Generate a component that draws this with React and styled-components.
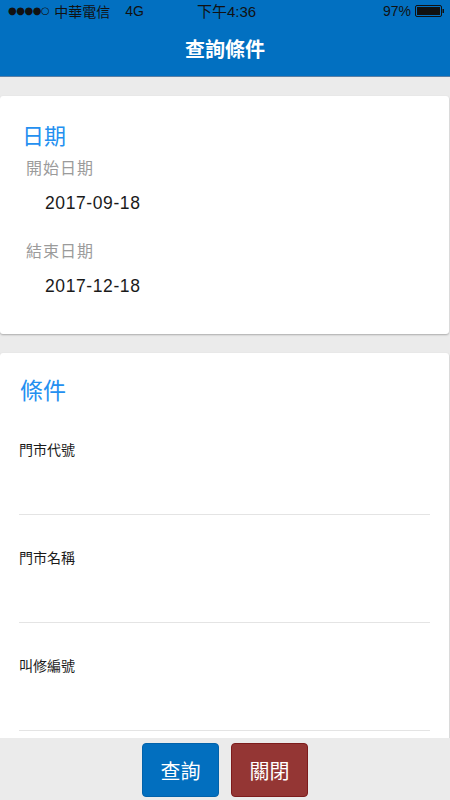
import React from "react";
import styled, { createGlobalStyle } from "styled-components";

const Global = createGlobalStyle`
  html, body { margin: 0; padding: 0; }
  body {
    background: #ebebeb;
    font-family: "Liberation Sans", "Noto Sans CJK TC", sans-serif;
    overflow: hidden;
  }
  * { box-sizing: border-box; }
`;

const Page = styled.div`
  width: 450px;
  height: 800px;
  display: flex;
  flex-direction: column;
  background: #ebebeb;
  overflow: hidden;
`;

const StatusBar = styled.div`
  height: 20px;
  background: #0270c1;
  display: grid;
  grid-template-columns: 1fr auto 1fr;
  align-items: center;
  padding: 0 5px 0 8px;
  font-size: 14px;
  color: #111;
`;

const StatusLeft = styled.div`
  display: flex;
  align-items: center;
  gap: 4px;
`;

const Dots = styled.span`
  font-size: 10px;
  letter-spacing: -0.5px;
  margin-right: 1px;
  font-family: "DejaVu Sans", sans-serif;
`;

const Carrier = styled.span`
  font-family: "Noto Sans CJK TC", sans-serif;
`;

const Net = styled.span`
  margin-left: 11px;
`;

const Clock = styled.div`
  font-size: 15px;
  font-family: "Liberation Sans", "Noto Sans CJK TC", sans-serif;
`;

const StatusRight = styled.div`
  display: flex;
  justify-content: flex-end;
  align-items: center;
  gap: 4px;
`;

const Header = styled.div`
  height: 57px;
  background: #0270c1;
  border-bottom: 1px solid #5a7fa5;
  display: flex;
  align-items: center;
  justify-content: center;
  padding-top: 1px;
  color: #fff;
  font-size: 20px;
  font-weight: 700;
  font-family: "Noto Sans CJK TC", sans-serif;
`;

const Content = styled.div`
  flex: 1;
  overflow: hidden;
  padding-top: 19px;
  display: flex;
  flex-direction: column;
  gap: 19px;
`;

const Card = styled.div`
  background: #fff;
  margin-right: 1px;
  border-radius: 3px;
  box-shadow: 0 1px 2px rgba(0, 0, 0, 0.28);
  padding: ${(p) => p.$pad};
  flex-shrink: 0;
`;

const CardTitle = styled.div`
  color: #2490f0;
  font-size: ${(p) => p.$size}px;
  line-height: 30px;
  font-family: "Noto Sans CJK TC", sans-serif;
  margin: ${(p) => p.$margin};
`;

const DateLabel = styled.div`
  color: #9b9b9b;
  font-size: 16px;
  line-height: 20px;
  letter-spacing: 1px;
  margin: ${(p) => p.$mt}px 0 0 4px;
  font-family: "Noto Sans CJK TC", sans-serif;
`;

const DateValue = styled.div`
  color: #1a1a1a;
  font-size: 17.5px;
  line-height: 20px;
  letter-spacing: 0.6px;
  margin: 16px 0 0 23px;
`;

const Field = styled.div`
  padding-top: 32px;
  border-bottom: 1px solid #e4e4e4;
`;

const FieldLabel = styled.div`
  font-size: 14px;
  line-height: 20px;
  color: #1a1a1a;
  font-family: "Noto Sans CJK TC", sans-serif;
`;

const FieldInput = styled.div`
  height: 55px;
`;

const Footer = styled.div`
  height: 62px;
  background: #ebebeb;
  display: flex;
  justify-content: center;
  gap: 12px;
  padding: 5px 0 0 0;
  flex-shrink: 0;
`;

const Button = styled.button`
  width: 77px;
  height: 54px;
  border-radius: 4px;
  border: 1px solid ${(p) => p.$border};
  background: ${(p) => p.$bg};
  color: #fff;
  font-size: 20px;
  font-family: "Noto Sans CJK TC", sans-serif;
  padding: 0;
  cursor: pointer;
`;

const Battery = () => (
  <svg width="30" height="12" viewBox="0 0 30 12">
    <rect x="0.5" y="0.5" width="26" height="11" rx="1.5" fill="none" stroke="#111" />
    <rect x="2" y="2" width="23" height="8" fill="#111" />
    <rect x="27.5" y="4" width="1.5" height="4" fill="#111" />
  </svg>
);

export default function App() {
  return (
    <Page>
      <Global />
      <StatusBar>
        <StatusLeft>
          <Dots>●●●●○</Dots>
          <Carrier>中華電信</Carrier>
          <Net>4G</Net>
        </StatusLeft>
        <Clock>下午4:36</Clock>
        <StatusRight>
          <span>97%</span>
          <Battery />
        </StatusRight>
      </StatusBar>
      <Header>查詢條件</Header>
      <Content>
        <Card $pad="23px 0 38px 22px">
          <CardTitle $size={22} $margin="0">日期</CardTitle>
          <DateLabel $mt={8}>開始日期</DateLabel>
          <DateValue>2017-09-18</DateValue>
          <DateLabel $mt={27}>結束日期</DateLabel>
          <DateValue>2017-12-18</DateValue>
        </Card>
        <Card $pad="21px 19px 40px 19px">
          <CardTitle $size={23} $margin="0 0 3px 1px">條件</CardTitle>
          <Field>
            <FieldLabel>門市代號</FieldLabel>
            <FieldInput />
          </Field>
          <Field>
            <FieldLabel>門市名稱</FieldLabel>
            <FieldInput />
          </Field>
          <Field>
            <FieldLabel>叫修編號</FieldLabel>
            <FieldInput />
          </Field>
        </Card>
      </Content>
      <Footer>
        <Button $bg="#026fbf" $border="#0262aa">查詢</Button>
        <Button $bg="#943634" $border="#7d1c1c">關閉</Button>
      </Footer>
    </Page>
  );
}
